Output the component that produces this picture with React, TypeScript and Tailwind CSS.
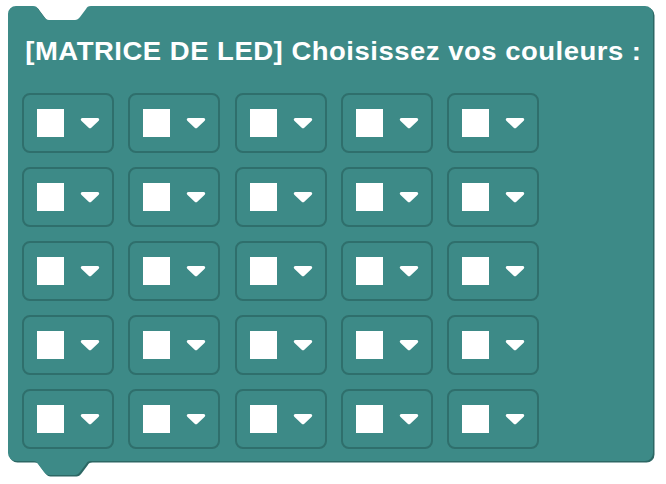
const ROWS = 5;
const COLS = 5;

const BLOCK_PATH =
  "M8,14 a8,8 0 0 1 8,-8 H33 c3,0 4,1 5,3 l6,8 c1.5,2 3,3 5,3 h26 c2,0 3.5,-1 5,-3 l6,-8 c1,-2 2,-3 5,-3 H645 a8,8 0 0 1 8,8 V453 a8,8 0 0 1 -8,8 H91 c-3,0 -4,1 -5,3 l-6,8 c-1.5,2 -3,3 -5,3 h-26 c-2,0 -3.5,-1 -5,-3 l-6,-8 c-1,-2 -2,-3 -5,-3 H16 a8,8 0 0 1 -8,-8 Z";

function DropArrow() {
  return (
    <svg width="20" height="12" viewBox="0 0 20 12" className="shrink-0">
      <path
        d="M2.5,1 H17.5 c1.6,0 2.3,1.6 1.2,2.7 l-7.4,7 c-0.7,0.7 -1.9,0.7 -2.6,0 l-7.4,-7 C0.2,2.6 0.9,1 2.5,1 Z"
        fill="#ffffff"
      />
    </svg>
  );
}

function ColourField() {
  return (
    <div className="flex h-[60px] w-[92px] items-center gap-[16px] rounded-[8px] border-2 border-[#2f6f6c] pl-[13px]">
      <div className="h-[28px] w-[27px] bg-white" />
      <DropArrow />
    </div>
  );
}

export default function App() {
  return (
    <div className="relative h-[484px] w-[666px] overflow-hidden bg-white">
      <svg className="absolute inset-0" width="666" height="484" viewBox="0 0 666 484">
        <path d={BLOCK_PATH} fill="#2c6764" transform="translate(1.5,1.5)" />
        <path d={BLOCK_PATH} fill="#3d8a87" />
      </svg>
      <div className="relative flex flex-col items-start pl-[22px] pt-[40px]">
        <div className="origin-left scale-x-[1.1] whitespace-nowrap pl-[3px] font-['Liberation_Sans',Arial,sans-serif] text-[25px] font-bold leading-[23px] tracking-[0.45px] text-white">
          [MATRICE DE LED] Choisissez vos couleurs :
        </div>
        <div className="mt-[30px] flex flex-col gap-[14px]">
          {Array.from({ length: ROWS }).map((_, r) => (
            <div key={r} className="flex gap-[14.25px]">
              {Array.from({ length: COLS }).map((_, c) => (
                <ColourField key={c} />
              ))}
            </div>
          ))}
        </div>
      </div>
    </div>
  );
}
